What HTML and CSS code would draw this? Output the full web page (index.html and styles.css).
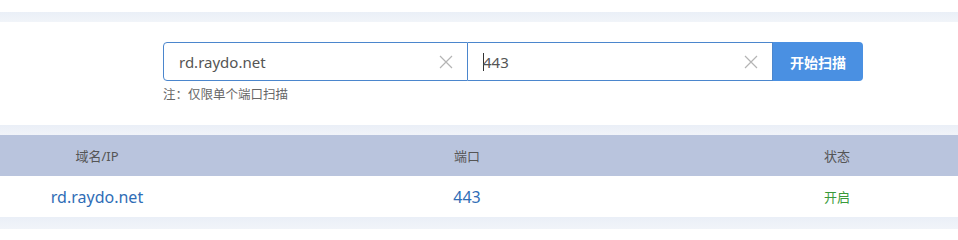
FILE: index.html
```html
<!DOCTYPE html>
<html lang="zh-CN">
<head>
<meta charset="utf-8">
<title>端口扫描</title>
<link rel="stylesheet" href="styles.css">
</head>
<body>
<div class="top-space"></div>
<div class="band"></div>
<section class="search">
  <div class="search-row">
    <div class="field field-left">
      <span class="value">rd.raydo.net</span>
      <svg class="clear" width="14" height="14" viewBox="0 0 14 14"><path d="M1 1L13 13M13 1L1 13" stroke="#b4b4b4" stroke-width="1.2" fill="none"/></svg>
    </div>
    <div class="field field-right">
      <span class="value"><span class="caret"></span>443</span>
      <svg class="clear" width="14" height="14" viewBox="0 0 14 14"><path d="M1 1L13 13M13 1L1 13" stroke="#b4b4b4" stroke-width="1.2" fill="none"/></svg>
    </div>
    <button class="scan-btn">开始扫描</button>
  </div>
  <p class="note">注：仅限单个端口扫描</p>
</section>
<div class="band band-mid"></div>
<div class="table">
  <div class="thead">
    <div class="cell c1">域名/IP</div>
    <div class="cell c2">端口</div>
    <div class="cell c3">状态</div>
  </div>
  <div class="trow">
    <div class="cell c1 link">rd.raydo.net</div>
    <div class="cell c2 link">443</div>
    <div class="cell c3 open">开启</div>
  </div>
</div>
<div class="band band-bottom"></div>
</body>
</html>
```
FILE: styles.css
```css
html, body {
  margin: 0;
  padding: 0;
  background: #ffffff;
  font-family: "Noto Sans", "Noto Sans CJK SC", sans-serif;
}
.top-space { height: 12px; }
.band {
  height: 10px;
  background: linear-gradient(#eaeff7, #f1f4f9);
}
.search {
  padding: 20px 0 0 163px;
  height: 103px;
  box-sizing: border-box;
}
.search-row {
  display: flex;
  height: 39px;
}
.field {
  width: 305px;
  box-sizing: border-box;
  border: 1px solid #4b86cd;
  display: flex;
  align-items: center;
  justify-content: space-between;
  padding: 0 14px 0 15px;
}
.field-left {
  border-radius: 4px 0 0 4px;
}
.field-right {
  border-left: none;
}
.value {
  font-size: 15px;
  color: #555555;
  display: flex;
  align-items: center;
}
.caret {
  display: inline-block;
  width: 1px;
  height: 18px;
  background: #333333;
  margin-right: -1px;
}
.clear { display: block; }
.scan-btn {
  width: 90px;
  border: none;
  background: #4a90e2;
  color: #ffffff;
  font-family: inherit;
  font-size: 14px;
  font-weight: 600;
  border-radius: 0 4px 4px 0;
  padding: 0;
}
.note {
  margin: 5px 0 0;
  font-size: 12.5px;
  color: #666666;
  line-height: 18px;
}
.thead, .trow {
  display: grid;
  grid-template-columns: 194px 546px 194px;
  align-items: center;
}
.thead {
  height: 41px;
  background: #b9c4dd;
  color: #555555;
  font-size: 13px;
}
.trow {
  height: 41px;
  font-size: 16px;
}
.cell { text-align: center; }
.link { color: #2f6db6; }
.open { color: #3a9a3a; font-size: 13px; }
.band-bottom { height: 12px; }
```
